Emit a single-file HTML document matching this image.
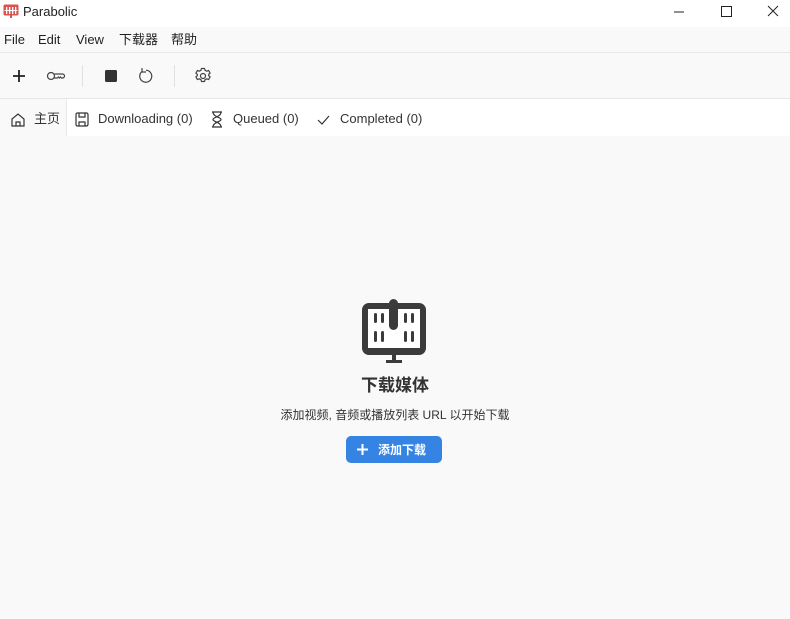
<!DOCTYPE html><html><head><meta charset="utf-8"><style>
body{margin:0;width:790px;height:619px;background:#f9f9f9;font-family:"Liberation Sans","Noto Sans CJK SC",sans-serif;color:#1f1f1f;position:relative;overflow:hidden}
.a{position:absolute}
span,div{line-height:16px}
.title{top:0;left:0;width:790px;height:27px;background:#fff}
.menu{top:27px;left:0;width:790px;height:25px;border-bottom:1px solid #e8e8e8;font-size:13px}
.menu span{position:absolute;top:5px}
.tb{top:53px;left:0;width:790px;height:45px;border-bottom:1px solid #e6e6e6}
.tabs{top:99px;left:0;width:790px;height:37px;background:#fff;font-size:13px;color:#333}
.tabs span{position:absolute;top:12px}
</style></head><body>
<div class="a title">
<svg class="a" style="left:3px;top:4px" width="16" height="15" viewBox="0 0 16 15"><rect x="0.5" y="0.5" width="15" height="11" rx="1.5" fill="#d9534f"/><g fill="#fff"><rect x="3" y="3" width="1.3" height="7"/><rect x="6" y="3" width="1.3" height="7"/><rect x="9" y="3" width="1.3" height="7"/><rect x="12" y="3" width="1.3" height="7"/><rect x="1.5" y="6" width="13" height="1"/></g><rect x="7" y="11" width="2" height="3" fill="#d9534f"/></svg>
<span class="a" style="left:23px;top:4px;font-size:13px">Parabolic</span>
<svg class="a" style="left:673px;top:5px" width="110" height="14"><path d="M1 7h10" stroke="#222"/><rect x="48.5" y="1.5" width="10" height="10" fill="none" stroke="#222"/><path d="M95 1l10 10M105 1l-10 10" stroke="#222"/></svg>
</div>
<div class="a menu"><span style="left:4px">File</span><span style="left:38px">Edit</span><span style="left:76px">View</span><span style="left:119px">下载器</span><span style="left:171px">帮助</span></div>
<div class="a tb">
<svg width="790" height="45">
<path d="M19 17v12M13 23h12" stroke="#222" stroke-width="1.8"/>
<g fill="none" stroke="#444" stroke-width="1.2"><circle cx="51" cy="23" r="3.5"/><path d="M54.5 21h8a2 2 0 0 1 0 4h-1l-1-1-1 1-1-1-1 1h-3.5"/></g>
<path d="M82.5 12v22M174.5 12v22" stroke="#e0e0e0"/>
<rect x="105" y="17" width="12" height="12" rx="1.5" fill="#333"/>
<path d="M142 18.5a6 6 0 1 0 4-1.3M142 15v4h4" fill="none" stroke="#444" stroke-width="1.2"/>
<g fill="none" stroke="#444" stroke-width="1.2"><circle cx="203" cy="23" r="2.5"/><path d="M201.5 15.5h3l.6 1.8 1.7.9 1.8-.7 1.5 2.6-1.4 1.2v1.4l1.4 1.2-1.5 2.6-1.8-.7-1.7.9-.6 1.8h-3l-.6-1.8-1.7-.9-1.8.7-1.5-2.6 1.4-1.2v-1.4l-1.4-1.2 1.5-2.6 1.8.7 1.7-.9z"/></g>
</svg></div>
<div class="a tabs">
<div class="a" style="left:0;top:0;width:66px;height:37px;background:#f9f9f9;border-right:1px solid #e8e8e8"></div>
<svg class="a" style="left:0;top:0" width="430" height="37"><g fill="none" stroke="#333" stroke-width="1.2">
<path d="M12 27v-7l6-5 6 5v7zM16 27v-4h4v4"/>
<rect x="76" y="14" width="12" height="13" rx="1.5"/><path d="M79 14v4h6v-4M79 27v-4h6v4"/>
<path d="M212 13h10M212 28h10M213 13c0 5 8 5 8 7.5s-8 2.5-8 7.5M221 13c0 5-8 5-8 7.5s8 2.5 8 7.5"/>
<path d="M318 21l4 4 7-8"/></g></svg>
<span style="left:34px">主页</span><span style="left:98px">Downloading (0)</span><span style="left:233px">Queued (0)</span><span style="left:340px">Completed (0)</span>
</div>
<svg class="a" style="left:361px;top:298px" width="66" height="66" viewBox="0 0 66 66">
<rect x="1" y="5" width="64" height="52" rx="7" fill="#3b3b3b"/>
<rect x="7" y="11" width="52" height="39" fill="#fff"/>
<g fill="#3b3b3b"><rect x="13" y="15" width="3" height="10" rx="1.5"/><rect x="20" y="15" width="3" height="10" rx="1.5"/><rect x="43" y="15" width="3" height="10" rx="1.5"/><rect x="50" y="15" width="3" height="10" rx="1.5"/>
<rect x="13" y="33" width="3" height="11" rx="1.5"/><rect x="20" y="33" width="3" height="11" rx="1.5"/><rect x="43" y="33" width="3" height="11" rx="1.5"/><rect x="50" y="33" width="3" height="11" rx="1.5"/>
<rect x="28" y="1" width="9" height="31" rx="4.5"/><rect x="31" y="57" width="4" height="6"/><rect x="25" y="62" width="16" height="3"/></g></svg>
<div class="a" style="left:0;width:790px;top:376px;text-align:center;font-size:17px;line-height:20px;font-weight:bold;color:#333">下载媒体</div>
<div class="a" style="left:0;width:790px;top:407px;text-align:center;font-size:12px;color:#333">添加视频, 音频或播放列表 URL 以开始下载</div>
<div class="a" style="left:346px;top:436px;width:96px;height:27px;background:#3584e4;border-radius:5px;color:#fff;font-size:12px;font-weight:bold">
<svg class="a" style="left:10px;top:7px" width="13" height="13"><path d="M6.5 1v11M1 6.5h11" stroke="#fff" stroke-width="2"/></svg>
<span class="a" style="left:32px;top:6px">添加下载</span></div>
</body></html>
